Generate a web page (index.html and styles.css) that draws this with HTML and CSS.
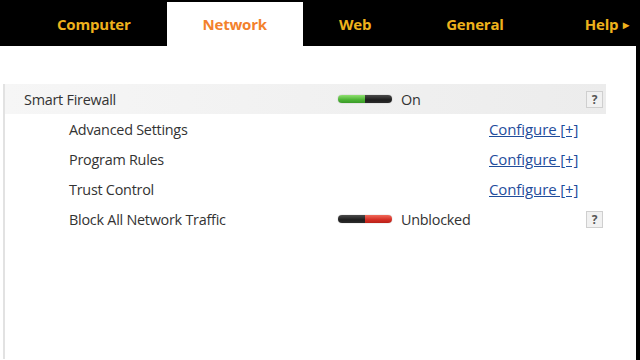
FILE: index.html
```html
<!DOCTYPE html>
<html lang="en">
<head>
    <meta charset="UTF-8">
    <meta name="viewport" content="width=device-width, initial-scale=1.0">
    <title>Network</title>
    <link rel="stylesheet" href="styles.css">
</head>
<body>
    <nav class="tabs">
        <a class="tab">Computer</a>
        <a class="tab active">Network</a>
        <a class="tab">Web</a>
        <a class="tab general">General</a>
        <a class="tab last">Help <span class="arrow">&#9656;</span></a>
    </nav>
    <div class="page">
        <div class="panel">
            <div class="row main">
                <span class="label">Smart Firewall</span>
                <span class="toggle on"><i></i><i></i></span>
                <span class="status">On</span>
                <span></span>
                <span class="help">?</span>
            </div>
            <div class="row sub">
                <span class="label">Advanced Settings</span>
                <span></span>
                <span></span>
                <a class="link" href="#">Configure [+]</a>
                <span></span>
            </div>
            <div class="row sub">
                <span class="label">Program Rules</span>
                <span></span>
                <span></span>
                <a class="link" href="#">Configure [+]</a>
                <span></span>
            </div>
            <div class="row sub">
                <span class="label">Trust Control</span>
                <span></span>
                <span></span>
                <a class="link" href="#">Configure [+]</a>
                <span></span>
            </div>
            <div class="row sub">
                <span class="label">Block All Network Traffic</span>
                <span class="toggle off"><i></i><i></i></span>
                <span class="status">Unblocked</span>
                <span></span>
                <span class="help">?</span>
            </div>
        </div>
    </div>
</body>
</html>
```

FILE: styles.css
```css
html, body {
    margin: 0;
    height: 100%;
}
body {
    font-family: 'Open Sans', 'Noto Sans', sans-serif;
    background-color: #000;
    display: flex;
    flex-direction: column;
    overflow: hidden;
}

.tabs {
    display: flex;
    height: 46px;
    padding-left: 21px;
    align-items: flex-end;
}
.tab {
    height: 44px;
    display: flex;
    align-items: center;
    justify-content: center;
    padding: 0 36px;
    color: #eeb21c;
    font-weight: 700;
    font-size: 15px;
    letter-spacing: -0.2px;
}
.tab.general {
    padding-left: 39px;
}
.tab.last {
    padding-left: 45px;
}
.tab.active {
    background-color: #fff;
    color: #f3812c;
}
.arrow {
    font-size: 12px;
    margin-left: 5px;
}

.page {
    flex: 1;
    background-color: #fff;
    margin-right: 4px;
    padding-top: 39px;
}
.panel {
    width: 601px;
    border-left: 2px solid #e2e2e2;
    margin-left: 3px;
    height: 100%;
}

.row {
    display: grid;
    grid-template-columns: 1fr 63px 88px 97px 16px;
    align-items: center;
    height: 30px;
    padding: 0 4px 0 19px;
    font-size: 14.4px;
    color: #333;
    letter-spacing: -0.25px;
}
.row.main {
    background: linear-gradient(90deg, #f6f6f6 0%, #ececec 100%);
    margin-top: -1px;
}
.row.sub .label {
    padding-left: 45px;
}

.toggle {
    display: flex;
    width: 54px;
    height: 8px;
    border-radius: 4px;
    overflow: hidden;
    box-shadow: 0 0 1px rgba(0,0,0,0.5);
}
.toggle i {
    flex: 1;
}
.toggle.on i:first-child {
    background: linear-gradient(180deg, #8fe070 0%, #4cb334 60%, #3a9a28 100%);
}
.toggle.on i:last-child,
.toggle.off i:first-child {
    background: linear-gradient(180deg, #4a4a4a 0%, #1e1e1e 60%, #2b2b2b 100%);
}
.toggle.off i:last-child {
    background: linear-gradient(180deg, #f06a5a 0%, #d42d24 60%, #b82219 100%);
}

.link {
    color: #1f4d9c;
    text-decoration: underline;
    font-size: 15px;
    letter-spacing: -0.1px;
}

.help {
    width: 15px;
    height: 15px;
    border: 1px solid #cfcfcf;
    background-color: #f1f1f1;
    color: #555;
    font-size: 12px;
    font-weight: 700;
    line-height: 15px;
    text-align: center;
    letter-spacing: 0;
}
```
